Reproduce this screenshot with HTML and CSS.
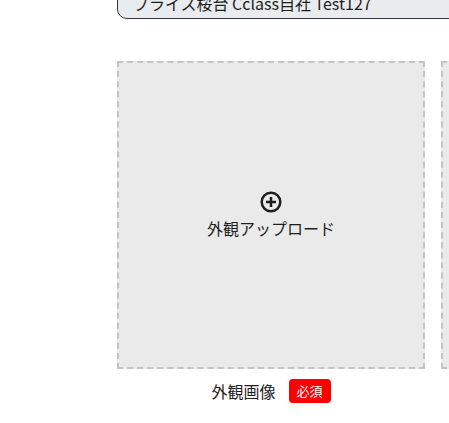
FILE: index.html
```html
<!DOCTYPE html>
<html lang="ja">
<head>
<meta charset="utf-8">
<link rel="stylesheet" href="styles.css">
</head>
<body>
<div class="page">
  <div class="field">プライス桜台 Cclass自社 Test127</div>
  <div class="uploads">
    <div class="upload-item">
      <div class="dropzone">
        <svg class="icon" width="24" height="24" viewBox="0 0 24 24" aria-hidden="true">
          <circle cx="12" cy="12" r="9.3" fill="none" stroke="#1e1e1e" stroke-width="2.5"/>
          <path d="M12 7v10M7 12h10" stroke="#1e1e1e" stroke-width="2.5" fill="none"/>
        </svg>
        <span class="dz-text">外観アップロード</span>
      </div>
      <div class="caption">
        <span class="caption-label">外観画像</span>
        <span class="badge">必須</span>
      </div>
    </div>
    <div class="upload-item">
      <div class="dropzone"></div>
    </div>
  </div>
</div>
</body>
</html>
```

FILE: styles.css
```css
html, body {
  margin: 0;
  padding: 0;
  background: #fff;
  overflow: hidden;
}
body {
  width: 449px;
  height: 423px;
  font-family: "Noto Sans CJK JP", "Noto Sans", sans-serif;
  color: #222;
}
.page {
  padding-left: 117px;
  margin-top: -20px;
}
.field {
  width: 640px;
  border: 1px solid #333;
  border-radius: 10px;
  background: #e9ecef;
  padding: 10px 15px 3px;
  font-size: 16px;
  line-height: 24px;
  white-space: nowrap;
  color: #1e1e1e;
}
.uploads {
  display: flex;
  gap: 16px;
  margin-top: 42px;
}
.upload-item {
  display: flex;
  flex-direction: column;
  align-items: center;
  flex: none;
}
.dropzone {
  box-sizing: border-box;
  width: 308px;
  height: 308px;
  border: 2px dashed #c4c4c4;
  background: #eaeaea;
  display: flex;
  flex-direction: column;
  align-items: center;
  justify-content: center;
  gap: 2px;
}
.icon {
  display: block;
}
.dz-text {
  font-size: 16px;
  line-height: 24px;
  color: #1e1e1e;
}
.caption {
  display: flex;
  align-items: center;
  gap: 13px;
  margin-top: 10px;
}
.caption-label {
  font-size: 16px;
  line-height: 24px;
  color: #1e1e1e;
}
.badge {
  background: #ff0000;
  color: #fff;
  font-size: 13px;
  line-height: 24px;
  height: 24px;
  padding: 0 8px;
  border-radius: 4px;
}
```
